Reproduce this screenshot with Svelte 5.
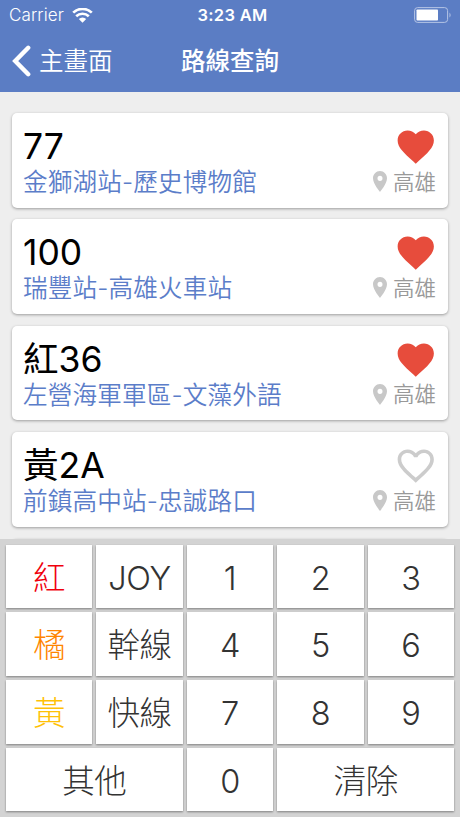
<script>
  let routes = $state([
    { name: '77', path: '金獅湖站-歷史博物館', city: '高雄', liked: true },
    { name: '100', path: '瑞豐站-高雄火車站', city: '高雄', liked: true },
    { name: '紅36', path: '左營海軍軍區-文藻外語', city: '高雄', liked: true },
    { name: '黃2A', path: '前鎮高中站-忠誠路口', city: '高雄', liked: false }
  ]);

  const keys = [
    { label: '紅', tone: 'red' },
    { label: 'JOY' },
    { label: '1' },
    { label: '2' },
    { label: '3' },
    { label: '橘', tone: 'orange' },
    { label: '幹線' },
    { label: '4' },
    { label: '5' },
    { label: '6' },
    { label: '黃', tone: 'yellow' },
    { label: '快線' },
    { label: '7' },
    { label: '8' },
    { label: '9' },
    { label: '其他', wide: true },
    { label: '0' },
    { label: '清除', wide: true }
  ];
</script>

<div class="screen">
  <header>
    <div class="status">
      <div class="carrier">
        <span>Carrier</span>
        <svg width="21" height="15" viewBox="0 0 21 15">
          <path d="M1.2 4.7a13.2 13.2 0 0 1 18.6 0" />
          <path d="M4.2 8.3a9 9 0 0 1 12.6 0" />
          <path class="dot" d="M6.8 11a5.2 5.2 0 0 1 7.4 0L10.5 14.7z" />
        </svg>
      </div>
      <span class="clock">3:23 AM</span>
      <svg class="battery" width="38" height="16" viewBox="0 0 38 16">
        <rect class="shell" x="0.6" y="0.6" width="33" height="14.8" rx="3" />
        <rect class="level" x="2.5" y="2.5" width="21.5" height="11" rx="0.8" />
        <path class="tip" d="M35.5 5.4q2.2 2.6 0 5.2z" />
      </svg>
    </div>
    <nav>
      <button class="back">
        <svg width="19" height="32" viewBox="0 0 19 32">
          <path d="M16.2 2.8L3.2 16l13 13.2" />
        </svg>
        <span>主畫面</span>
      </button>
      <h1>路線查詢</h1>
    </nav>
  </header>

  <main>
    {#each routes as route}
      <article class="card">
        <div class="info">
          <div class="name">{route.name}</div>
          <div class="path">{route.path}</div>
        </div>
        <div class="side">
          <button class="like" class:liked={route.liked} aria-label="like" onclick={() => (route.liked = !route.liked)}>
            <svg width="43.5" height="43.5" viewBox="0 0 24 24">
              {#if route.liked}
                <path d="M12 21.35l-1.45-1.32C5.4 15.36 2 12.28 2 8.5 2 5.42 4.42 3 7.5 3c1.74 0 3.41.81 4.5 2.09C13.09 3.81 14.76 3 16.5 3 19.58 3 22 5.42 22 8.5c0 3.78-3.4 6.86-8.55 11.54L12 21.35z" />
              {:else}
                <path d="M16.5 3c-1.74 0-3.41.81-4.5 2.09C10.91 3.81 9.24 3 7.5 3 4.42 3 2 5.42 2 8.5c0 3.78 3.4 6.86 8.55 11.54L12 21.35l1.45-1.32C18.6 15.36 22 12.28 22 8.5 22 5.42 19.58 3 16.5 3zm-4.4 15.55l-.1.1-.1-.1C7.14 14.24 4 11.39 4 8.5 4 6.5 5.5 5 7.5 5c1.54 0 3.04.99 3.57 2.36h1.87C13.46 5.99 14.96 5 16.5 5c2 0 3.5 1.5 3.5 3.5 0 2.89-3.14 5.74-7.9 10.05z" />
              {/if}
            </svg>
          </button>
          <div class="city">
            <svg width="14" height="21" viewBox="5 2 14 20" preserveAspectRatio="none">
              <path d="M12 2C8.13 2 5 5.13 5 9c0 5.25 7 13 7 13s7-7.75 7-13c0-3.87-3.13-7-7-7zm0 9.5a2.5 2.5 0 0 1 0-5 2.5 2.5 0 0 1 0 5z" />
            </svg>
            <span>{route.city}</span>
          </div>
        </div>
      </article>
    {/each}
    <div class="card"></div>
  </main>

  <section class="keypad">
    {#each keys as key}
      <button class={['key', key.tone, key.wide && 'wide']}>{key.label}</button>
    {/each}
  </section>
</div>

<style>
  :global(body) {
    margin: 0;
  }

  .screen {
    display: flex;
    flex-direction: column;
    height: 817px;
    overflow: hidden;
    background: #eee;
    font-family: Inter, 'Noto Sans CJK TC', sans-serif;
    font-weight: 350;
  }

  button {
    border: none;
    padding: 0;
    margin: 0;
    background: none;
    font: inherit;
    color: inherit;
    cursor: pointer;
  }

  svg {
    display: block;
    flex: none;
  }

  header {
    flex: none;
    height: 92px;
    background: #5b7dc4;
    color: #fff;
  }

  .status {
    display: grid;
    grid-template-columns: 1fr auto 1fr;
    align-items: center;
    height: 30px;
    padding: 0 8px 0 9px;
    font-size: 17px;
  }

  .carrier {
    display: flex;
    align-items: center;
    gap: 8px;
    letter-spacing: 0.1px;
  }

  .carrier path {
    fill: none;
    stroke: #fff;
    stroke-width: 2.6;
  }

  .carrier .dot {
    fill: #fff;
    stroke: none;
  }

  .clock {
    padding-left: 4px;
    font-weight: 600;
    font-size: 16.5px;
    letter-spacing: 0.3px;
  }

  .battery {
    justify-self: end;
  }

  .shell {
    fill: none;
    stroke: #b5c4e5;
    stroke-width: 1;
  }

  .level {
    fill: #fff;
  }

  .tip {
    fill: #b5c4e5;
  }

  nav {
    display: grid;
    grid-template-columns: 1fr auto 1fr;
    align-items: center;
    height: 62px;
    padding: 0 12px;
  }

  .back {
    display: flex;
    align-items: center;
    gap: 8px;
    font-size: 24.5px;
    line-height: 36px;
  }

  .back path {
    fill: none;
    stroke: #fff;
    stroke-width: 4.4;
    stroke-linecap: round;
    stroke-linejoin: miter;
  }

  h1 {
    margin: 0;
    font-size: 24.5px;
    font-weight: 500;
    line-height: 36px;
  }

  main {
    flex: 1;
    display: flex;
    flex-direction: column;
    gap: 11.8px;
    min-height: 0;
    padding: 21px 12px 0;
    overflow: hidden;
  }

  .card {
    flex: none;
    display: flex;
    justify-content: space-between;
    box-sizing: border-box;
    height: 94.6px;
    padding: 13px 12px 0 11px;
    border-radius: 5px;
    background: #fff;
    box-shadow: 0 1px 3px rgba(0, 0, 0, 0.35);
  }

  .name {
    height: 40px;
    font-size: 35.5px;
    font-weight: 390;
    line-height: 41px;
    color: #000;
  }

  .path {
    font-size: 24.6px;
    line-height: 32px;
    letter-spacing: 0.15px;
    color: #5b7dc9;
  }

  .side {
    display: flex;
    flex-direction: column;
    align-items: flex-end;
  }

  .like {
    margin: -1px -1px 0 0;
    fill: #ccc;
  }

  .liked {
    fill: #e74c3c;
  }

  .city {
    display: flex;
    align-items: center;
    gap: 6px;
    margin-top: -2px;
    font-size: 21.5px;
    line-height: 30px;
    color: #999;
  }

  .city svg {
    fill: #c8c8c8;
  }

  .keypad {
    flex: none;
    display: grid;
    grid-template-columns: repeat(5, 1fr);
    grid-template-rows: repeat(4, 63.5px);
    gap: 4.2px;
    box-sizing: border-box;
    height: 278px;
    padding: 5.8px 6px 0;
    background: #d3d3d3;
  }

  .key {
    padding-top: 4px;
    background: #fff;
    box-shadow: 0 1px 2px rgba(0, 0, 0, 0.4);
    font-size: 32.5px;
    font-weight: 325;
    line-height: 40px;
    letter-spacing: -0.4px;
    color: #333;
  }

  .wide {
    grid-column: span 2;
  }

  .red {
    color: #f0000c;
  }

  .orange {
    color: #ff8500;
  }

  .yellow {
    color: #ffc107;
  }
</style>
